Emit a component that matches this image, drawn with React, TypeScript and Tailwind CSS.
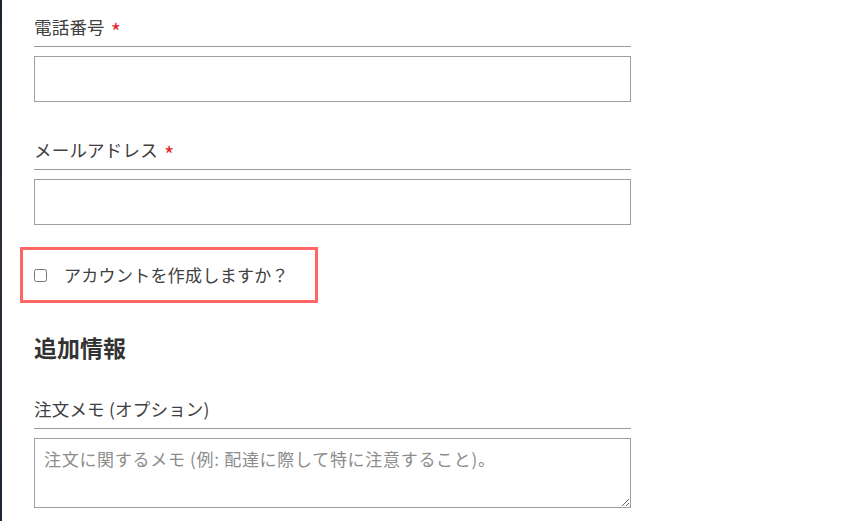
import React from "react";

const font = { fontFamily: '"Noto Sans CJK JP", "Noto Sans", sans-serif' };

function Label({ text, required }: { text: string; required?: boolean }) {
  return (
    <div className="flex h-[33px] border-b border-[#9a9a9a] pb-[6px] text-[17.5px] leading-[26px] text-[#404040]">
      <span className="tracking-[0.2px]">{text}</span>
      {required && (
        <span className="ml-[6px] h-[26px] translate-y-[3px] text-[22px] leading-[26px] text-[#e0282d]">*</span>
      )}
    </div>
  );
}

export default function App() {
  return (
    <div className="flex min-h-[521px] w-[846px] bg-white" style={font}>
      <div className="w-[2px] shrink-0 bg-gradient-to-b from-[#1b2530] via-[#2a2f3a] to-[#1d2633]" />
      <div className="flex w-[597px] flex-col pl-[32px] pt-[14px] box-content">
        <Label text="電話番号" required />
        <input
          type="text"
          className="mt-[9px] h-[46px] w-full border border-[#9e9e9e] bg-white px-2 outline-none"
        />
        <div className="mt-[35px]">
          <Label text="メールアドレス" required />
        </div>
        <input
          type="email"
          className="mt-[9px] h-[46px] w-full border border-[#9e9e9e] bg-white px-2 outline-none"
        />
        <div className="-ml-[14px] mt-[22px] flex h-[56px] w-[298px] items-center border-[3px] border-[#ff6767] pl-[11px]">
          <input type="checkbox" className="m-0 h-[13px] w-[13px]" />
          <span className="ml-[17px] text-[17px] leading-[26px] tracking-[0.3px] text-[#404040]">
            アカウントを作成しますか？
          </span>
        </div>
        <h3 className="mt-[29px] text-[23px] font-bold leading-[30px] text-[#333]">追加情報</h3>
        <div className="mt-[34px]">
          <Label text="注文メモ (オプション)" />
        </div>
        <textarea
          className="mt-[9px] h-[70px] w-full border border-[#9e9e9e] bg-white px-[9px] py-[7px] text-[17px] leading-[26px] tracking-[0.7px] text-[#404040] outline-none placeholder:text-[#8c8c8c]"
          placeholder="注文に関するメモ (例: 配達に際して特に注意すること)。"
        />
      </div>
    </div>
  );
}
